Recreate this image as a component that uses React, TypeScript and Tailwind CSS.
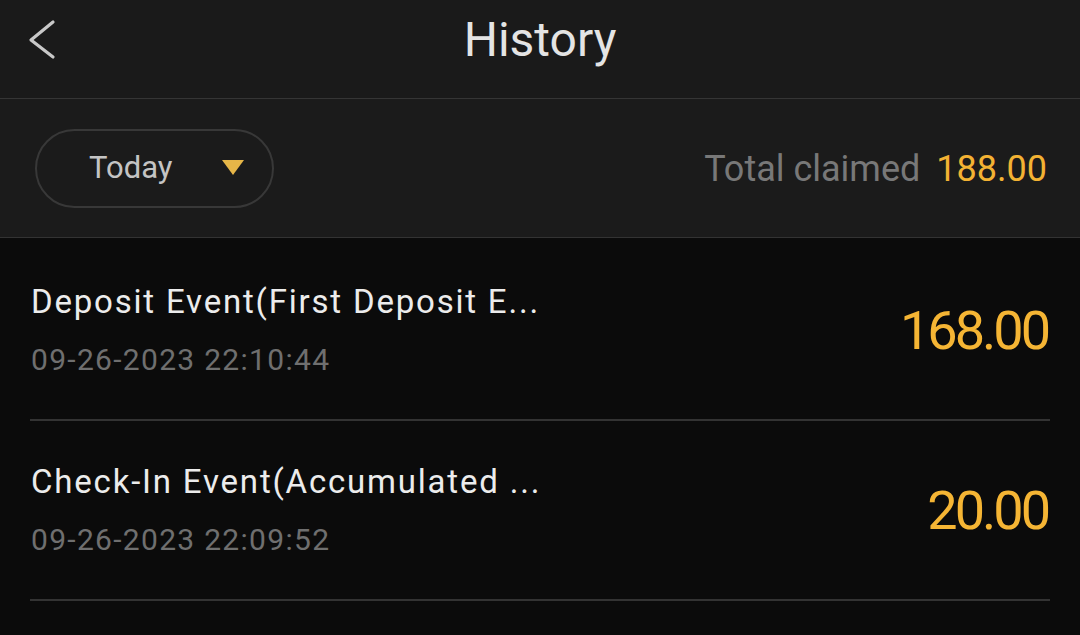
const records = [
  { title: 'Deposit Event(First Deposit E...', time: '09-26-2023 22:10:44', amount: '168.00' },
  { title: 'Check-In Event(Accumulated ...', time: '09-26-2023 22:09:52', amount: '20.00' },
]

export default function App() {
  return (
    <div className="w-[1080px] h-[635px] overflow-hidden bg-[#0b0b0b] font-['Roboto',sans-serif]">
      {/* top bar */}
      <div className="relative h-[99px] flex items-center justify-center bg-[#1a1a1a] border-b border-[#353535]">
        <svg className="absolute left-[27px] top-[19px]" width="30" height="42" viewBox="0 0 30 42" fill="none">
          <polyline points="26,3 4,21 26,38" stroke="#c8c8c8" strokeWidth="3.2" strokeLinecap="round" strokeLinejoin="round" />
        </svg>
        <h1 className="text-[48px] text-[#e4e4e4] mb-[18px]">History</h1>
      </div>

      {/* filter */}
      <div className="h-[139px] flex items-center justify-between px-[35px] pr-[33px] bg-[#1b1b1b] border-b border-[#333]">
        <button className="w-[239px] h-[79px] rounded-full border-2 border-[#383838] flex items-center pl-[52px] pr-[28px] justify-between">
          <span className="text-[31px] text-[#c4c4c4]">Today</span>
          <svg width="22" height="16" viewBox="0 0 22 16">
            <path d="M0 0 H22 L11 15 Z" fill="#e6b648" />
          </svg>
        </button>
        <div className="flex items-baseline gap-[16px] text-[36px] mt-[2px]">
          <span className="text-[#787878]">Total claimed</span>
          <span className="text-[#f3b233]">188.00</span>
        </div>
      </div>

      {/* list */}
      <div className="px-[30px] pt-[3px]">
        {records.map((r) => (
          <div key={r.time} className="h-[180px] flex items-center justify-between border-b-2 border-[#333]">
            <div className="flex flex-col gap-[12px] pl-[1px]">
              <span className="text-[33px] leading-[48px] tracking-[1.8px] text-[#ececec]">{r.title}</span>
              <span className="text-[30px] leading-[44px] tracking-[1.3px] text-[#6f6f6f]">{r.time}</span>
            </div>
            <span className="text-[54px] tracking-[-3px] text-[#f5b534] pr-[2px]">{r.amount}</span>
          </div>
        ))}
      </div>
    </div>
  )
}
